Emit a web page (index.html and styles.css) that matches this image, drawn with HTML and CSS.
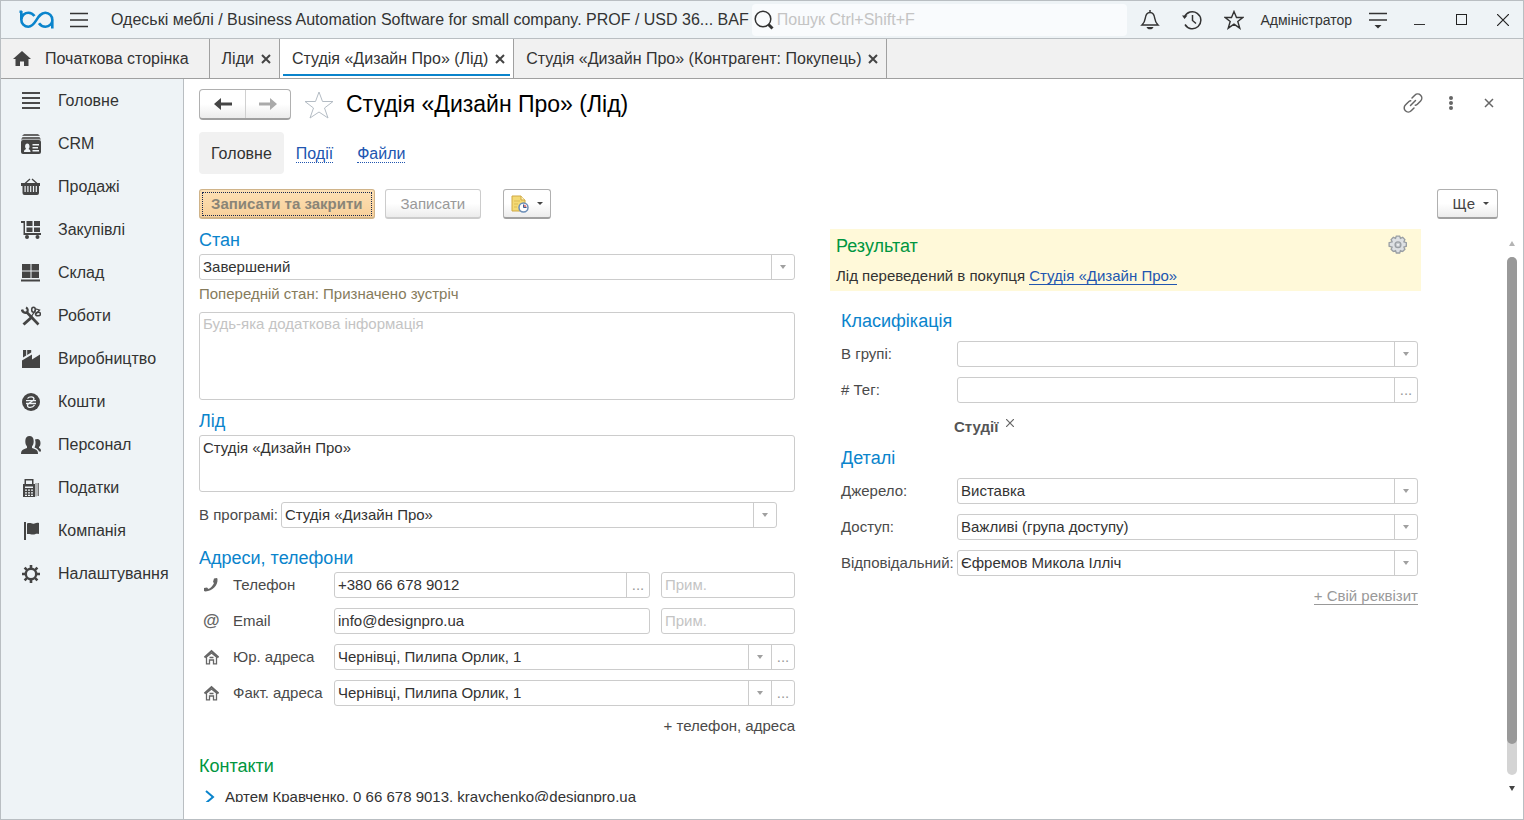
FILE: index.html
```html
<!DOCTYPE html>
<html lang="uk">
<head>
    <meta charset="UTF-8">
    <meta name="viewport" content="width=device-width, initial-scale=1.0">
    <title>Студія «Дизайн Про» (Лід)</title>
    <link rel="stylesheet" href="styles.css">
</head>
<body>
<div class="window">
    <header class="titlebar">
        <svg class="logo" width="36" height="20" viewBox="0 0 36 20" fill="none" stroke="#0a84cc" stroke-width="2.600">
            <path d="M.5 1.800H3M2.300 1v8.500a7 7 0 0 0 7 7.200c8 0 8.500-14 17-14a7 7 0 0 1 7 7.300v8.500M33.500 9.800a7 7 0 0 1-7 6.900c-3.200 0-5.200-1.500-6.500-3.500M15.500 6C14 4 12.200 2.700 9.500 2.700c-3.500 0-7 2.500-7 6.500"/>
        </svg>
        <button class="icon-btn menu-btn" aria-label="Меню">
            <svg width="18" height="16" viewBox="0 0 18 16" stroke="#333" stroke-width="1.500"><path d="M0 1.500h18M0 8h18M0 14.500h18"/></svg>
        </button>
        <span class="app-title">Одеські меблі / Business Automation Software for small company. PROF / USD 36... BAF</span>
        <label class="search">
            <svg width="20" height="20" viewBox="0 0 20 20" fill="none" stroke="#333"><circle cx="9" cy="9" r="7.800" stroke-width="1.500"/><path d="M14.500 14.500l4 4" stroke-width="3"/></svg>
            <input type="text" placeholder="Пошук Ctrl+Shift+F" aria-label="Пошук">
        </label>
        <button class="icon-btn" aria-label="Сповіщення">
            <svg width="20" height="20" viewBox="0 0 20 20" fill="none" stroke="#333" stroke-width="1.500"><path d="M10 0v2M2 15h16c-2-2-2.800-3.500-3.200-6.500C14.300 4.500 13 2.500 10 2.500S5.700 4.500 5.200 8.500C4.800 11.500 4 13 2 15z"/><path d="M6.500 17h7c-.7 1.500-1.500 2.300-3.500 2.300S7.200 18.500 6.500 17z" fill="#333" stroke="none"/></svg>
        </button>
        <button class="icon-btn" aria-label="Історія">
            <svg width="20" height="20" viewBox="0 0 20 20" fill="none" stroke="#333" stroke-width="1.500"><path d="M2.500 7A8.500 8.500 0 1 1 3 14.500"/><path d="M10.500 5v5.500l3.500 3"/><path d="M0 5.500h5.500L2.500 9z" fill="#333" stroke="none"/></svg>
        </button>
        <button class="icon-btn" aria-label="Обране">
            <svg width="20" height="20" viewBox="0 0 20 20" fill="none" stroke="#333" stroke-width="1.400"><path d="M10 1.500l2.500 6h6.300l-5 4 2 6.700-5.800-4-5.800 4 2-6.700-5-4h6.300z"/></svg>
        </button>
        <a class="user" href="#">Адміністратор</a>
        <button class="icon-btn" aria-label="Налаштування вікна">
            <svg width="18" height="18" viewBox="0 0 18 18" stroke="#333" stroke-width="1.500"><path d="M0 2.500h18M0 9h18"/><path d="M5.500 14h7l-3.500 3.500z" fill="#333" stroke="none"/></svg>
        </button>
        <button class="icon-btn" aria-label="Згорнути">
            <svg width="12" height="12" viewBox="0 0 12 12" stroke="#333"><path d="M0 10.500h11"/></svg>
        </button>
        <button class="icon-btn" aria-label="Розгорнути">
            <svg width="12" height="12" viewBox="0 0 12 12" fill="none" stroke="#222"><rect x=".5" y=".5" width="10" height="10"/></svg>
        </button>
        <button class="icon-btn close-btn" aria-label="Закрити вікно">
            <svg width="12" height="12" viewBox="0 0 12 12" stroke="#222" stroke-width="1.200"><path d="M0 0l12 12M12 0L0 12"/></svg>
        </button>
    </header>

    <nav class="tabs">
        <a class="tab tab-home" href="#">
            <svg width="18" height="15" viewBox="0 0 18 15" fill="#444"><path d="M9 0l9 8h-2.500v7h-4.500v-4.500H7V15H2.500V8H0z"/></svg>
            Початкова сторінка
        </a>
        <div class="tab"><a href="#">Ліди</a><button class="tab-close" aria-label="Закрити"><svg width="10" height="10" viewBox="0 0 10 10"><path d="M1 1l8 8M9 1L1 9"/></svg></button></div>
        <div class="tab active"><a href="#">Студія «Дизайн Про» (Лід)</a><button class="tab-close" aria-label="Закрити"><svg width="10" height="10" viewBox="0 0 10 10"><path d="M1 1l8 8M9 1L1 9"/></svg></button></div>
        <div class="tab"><a href="#">Студія «Дизайн Про» (Контрагент: Покупець)</a><button class="tab-close" aria-label="Закрити"><svg width="10" height="10" viewBox="0 0 10 10"><path d="M1 1l8 8M9 1L1 9"/></svg></button></div>
    </nav>

    <div class="workspace">
        <nav class="sidebar">
            <a href="#"><svg width="20" height="20" viewBox="0 0 20 20" stroke="#4a4a4a" stroke-width="2"><path d="M1 2h18M1 7h18M1 12h18M1 17h18"/></svg>Головне</a>
            <a href="#"><svg width="20" height="20" viewBox="0 0 20 20" fill="#444"><path d="M3 0h14l2 2H1zM1.500 3h17L20 5.500H0z" fill="#666"/><path fill-rule="evenodd" d="M2 6h16a2 2 0 0 1 2 2v10a2 2 0 0 1-2 2H2a2 2 0 0 1-2-2V8a2 2 0 0 1 2-2zm1 12h6.500c0-2-.8-2.500-2-3 .8-.7 1-1.500 1-2.500 0-1.700-.8-3-2.200-3s-2.200 1.300-2.200 3c0 1 .3 1.800 1 2.500-1.300.5-2.100 1-2.100 3zM11.500 10v1.500H18V10zm0 3v1.500H17V13zm0 3v1.500H18V16z"/></svg>CRM</a>
            <a href="#"><svg width="20" height="20" viewBox="0 0 20 20" fill="#444"><path d="M4 6.500L9 2M16 6.500L11 2" stroke="#444" stroke-width="1.300"/><path d="M0 6h19v3H0z"/><path fill-rule="evenodd" d="M1.500 9h16.500v7a2 2 0 0 1-2 2H3.500a2 2 0 0 1-2-2zm2 0v6h1.200V9zm2.800 0v6h1.200V9zm2.800 0v6h1.200V9zm2.800 0v6h1.200V9zm2.800 0v6h1.200V9z"/></svg>Продажі</a>
            <a href="#"><svg width="20" height="20" viewBox="0 0 20 20" fill="#444"><path d="M0 1h4v12h16v2H2.500V3H0zM5.500 1h6v5h-6zM13 1h6v5h-6zM5.500 7.500h6v4.500h-6zM13 7.500h6v4.500h-6z"/><circle cx="6" cy="17" r="2"/><circle cx="16.500" cy="17" r="2"/></svg>Закупівлі</a>
            <a href="#"><svg width="20" height="20" viewBox="0 0 20 20" fill="#444"><path d="M1 1h8.500v6.500H1zM10.500 1H18v6.500h-7.500zM1 8.500h8.500V15H1zM10.500 8.500H18V15h-7.500zM0 16.500h19v2H0z"/></svg>Склад</a>
            <a href="#"><svg width="20" height="20" viewBox="0 0 20 20" fill="none" stroke="#444"><path d="M1 3.500c.5 2.500 2.500 3.800 5 3L17.500 18.500" stroke-width="2.600"/><path d="M5 1.500c1.800 1 2.300 3 1 5" stroke-width="2.200"/><path d="M2.500 18.500l9-8" stroke-width="3"/><ellipse cx="12.500" cy="3.800" rx="1.800" ry="2.500" stroke-width="1.500"/><ellipse cx="17" cy="8" rx="2.500" ry="1.800" stroke-width="1.500"/><path d="M10 11l3-4.500L15 3l3.500 1-3.500 4" stroke-width="1.300"/></svg>Роботи</a>
            <a href="#"><svg width="20" height="20" viewBox="0 0 20 20" fill="#444"><path d="M1 19v-7.500l10-6v5l8-5V19zM2 1h3.200v5.500L2 8.500zM6.200 1h4v2.500l-4 2.500z"/></svg>Виробництво</a>
            <a href="#"><svg width="20" height="20" viewBox="0 0 20 20" fill="none"><circle cx="10" cy="10" r="9" fill="#444"/><path d="M6.500 6.500C8 4.300 13 4 13 7c0 3-6.500 3-6.500 6.500 0 2.700 5 2.500 7-.3M5 8.700h10M5 11.500h10" stroke="#eef3f6" stroke-width="1.300"/></svg>Кошти</a>
            <a href="#"><svg width="20" height="20" viewBox="0 0 20 20" fill="#444"><path d="M0 19c0-4 2-4.500 6-6V11.500C4.800 10 4.300 8.500 4.300 6 4.300 2.700 6 1 8.500 1S12.700 2.700 12.700 6c0 2.500-.5 4-1.700 5.500V13c4 1.500 6 2 6 6z"/><path d="M14 4.500c3-1.500 5.500 0 5.500 3.500 0 2-.5 3-1.500 4v1c1.500.5 2 1 2 3.500h-2c-.5-2-2-3-4.500-4 1-2 1.500-5 .5-8z"/></svg>Персонал</a>
            <a href="#"><svg width="20" height="20" viewBox="0 0 20 20" fill="#444"><path fill-rule="evenodd" d="M3.500 1h9v5H14v13H2V6h1.500zM5 2.500V6h6V2.500zM4 8.500V10h8V8.500zM4 11.500v1.300h2v-1.300zm3 0v1.300h2v-1.300zm3 0v1.300h2v-1.300zm-6 2.700v1.300h2v-1.300zm3 0v1.300h2v-1.300zm3 0v1.300h2v-1.300zM4 16.700V18h2v-1.300zm3 0V18h2v-1.300zm3 0V18h2v-1.300z"/><path d="M14.500 5h1v13.500h-1zM16.500 5H18v13h-1.500z" fill="#777"/></svg>Податки</a>
            <a href="#"><svg width="20" height="20" viewBox="0 0 20 20" fill="#444"><path d="M3 1h2v18H3zM6 2.500c4-1.500 4.500 1 7.500 0 2-1 3-1 4.500-.5v11c-3-.8-4 .5-6 .5-2.500 0-3-.8-6-.5z"/></svg>Компанія</a>
            <a href="#"><svg width="20" height="20" viewBox="0 0 20 20" fill="none" stroke="#444"><circle cx="10" cy="10" r="5.200" stroke-width="2.400"/><path d="M10 1v3.500M10 15.500V19M1 10h3.500M15.500 10H19M3.600 3.600l2.500 2.500M13.900 13.900l2.500 2.500M3.600 16.400l2.500-2.500M13.900 6.100l2.500-2.500" stroke-width="2.600"/></svg>Налаштування</a>
        </nav>

        <main class="content">
            <div class="form-header">
                <div class="history-nav">
                    <button aria-label="Назад"><svg width="18" height="14" viewBox="0 0 18 14" fill="#444"><path d="M0 7l7-6v4.500h11v3H7V13z"/></svg></button>
                    <button aria-label="Вперед" disabled><svg width="18" height="14" viewBox="0 0 18 14" fill="#aaa"><path d="M18 7l-7-6v4.500H0v3h11V13z"/></svg></button>
                </div>
                <button class="fav" aria-label="Додати в обране"><svg width="30" height="28" viewBox="0 0 30 28" fill="none" stroke="#b4bcc4"><path d="M15 1l3.500 9.500H29l-8.500 6.500 3.500 10-9-6-9 6 3.500-10L1 10.500h10.500z"/></svg></button>
                <h1>Студія «Дизайн Про» (Лід)</h1>
                <button class="icon-btn" aria-label="Посилання"><svg width="20" height="20" viewBox="0 0 20 20" fill="none" stroke="#666" stroke-width="1.500" stroke-linecap="round"><path d="M9 5l2.800-2.800a3.900 3.900 0 0 1 5.800 5.800l-3 3a4 4 0 0 1-2.300 1.200M11 15l-2.800 2.800A3.900 3.900 0 0 1 2.400 12l3-3a4 4 0 0 1 2.300-1.200M7.500 12.500l5-5"/></svg></button>
                <button class="icon-btn" aria-label="Більше"><svg width="4" height="14" viewBox="0 0 4 14" fill="#666"><circle cx="2" cy="2" r="2"/><circle cx="2" cy="7" r="2"/><circle cx="2" cy="12" r="2"/></svg></button>
                <button class="icon-btn" aria-label="Закрити"><svg width="10" height="10" viewBox="0 0 10 10" stroke="#666" stroke-width="1.500"><path d="M1 1l8 8M9 1L1 9"/></svg></button>
            </div>

            <nav class="form-nav">
                <a class="current" href="#">Головне</a>
                <a href="#"><span>Події</span></a>
                <a href="#"><span>Файли</span></a>
            </nav>

            <div class="toolbar">
                <button class="btn primary">Записати та закрити</button>
                <button class="btn muted">Записати</button>
                <button class="btn reminder" aria-label="Створити нагадування">
                    <svg width="18" height="18" viewBox="0 0 18 18"><path d="M1 1h9l4 4v11H1z" fill="#f4da75" stroke="#cfa845"/><path d="M10 1v4h4" fill="#fff3c0" stroke="#cfa845"/><path d="M3 6h6M3 9h4M3 12h3" stroke="#dcbb55"/><circle cx="12.500" cy="12.500" r="4.500" fill="#fff" stroke="#6a8db8" stroke-width="1.500"/><path d="M12.500 12.500V9.500a3 3 0 0 1 3 3z" fill="#e08080"/><path d="M12.500 9.500v3h3" fill="none" stroke="#3c5f94"/></svg>
                    <span class="caret"></span>
                </button>
                <button class="btn more">Ще <span class="caret"></span></button>
            </div>

            <div class="form-area">
                <form class="columns">
                    <div class="column">
                        <h2>Стан</h2>
                        <div class="combo">
                            <select aria-label="Стан"><option>Завершений</option></select>
                        </div>
                        <p class="hint">Попередній стан: Призначено зустріч</p>
                        <textarea class="note" placeholder="Будь-яка додаткова інформація" aria-label="Додаткова інформація"></textarea>

                        <h2>Лід</h2>
                        <textarea class="name" aria-label="Лід">Студія «Дизайн Про»</textarea>
                        <div class="program-row">
                            <label for="program">В програмі:</label>
                            <div class="combo">
                                <select id="program"><option>Студія «Дизайн Про»</option></select>
                            </div>
                        </div>

                        <h2 class="spaced">Адреси, телефони</h2>
                        <div class="addresses">
                            <svg width="16" height="16" viewBox="0 0 16 16" fill="#666"><path d="M11 1.500l3-.5.500 1c.5 6.500-5 12-12 12.500L1 14v-3l3-.5 1.500 1.500c2.500-1 4.500-3.500 5.500-6L10 5z"/></svg>
                            <label for="phone">Телефон</label>
                            <div class="field">
                                <input type="text" id="phone" value="+380 66 678 9012">
                                <button type="button" class="dots" aria-label="Вибрати">...</button>
                            </div>
                            <input class="box" type="text" placeholder="Прим." aria-label="Примітка до телефону">

                            <span class="at">@</span>
                            <label for="email">Email</label>
                            <input class="box" type="text" id="email" value="info@designpro.ua">
                            <input class="box" type="text" placeholder="Прим." aria-label="Примітка до email">

                            <svg width="16" height="16" viewBox="0 0 16 16" fill="none" stroke="#666" stroke-width="1.500"><path d="M1.500 8.500L8.500 2l7 6.500" stroke-width="2"/><path d="M3.500 8v6.800h3V11h4v3.800h3V8l-5-4z" stroke-width="1.300"/><path d="M6.500 8.500h4"/></svg>
                            <label for="legal">Юр. адреса</label>
                            <div class="field wide">
                                <input type="text" id="legal" value="Чернівці, Пилипа Орлик, 1">
                                <button type="button" aria-label="Список"><span class="arrow"></span></button>
                                <button type="button" class="dots" aria-label="Вибрати">...</button>
                            </div>

                            <svg width="16" height="16" viewBox="0 0 16 16" fill="none" stroke="#666" stroke-width="1.500"><path d="M1.500 8.500L8.500 2l7 6.500" stroke-width="2"/><path d="M3.500 8v6.800h3V11h4v3.800h3V8l-5-4z" stroke-width="1.300"/><path d="M6.500 8.500h4"/></svg>
                            <label for="actual">Факт. адреса</label>
                            <div class="field wide">
                                <input type="text" id="actual" value="Чернівці, Пилипа Орлик, 1">
                                <button type="button" aria-label="Список"><span class="arrow"></span></button>
                                <button type="button" class="dots" aria-label="Вибрати">...</button>
                            </div>
                        </div>
                        <a class="add-link" href="#">+ телефон, адреса</a>

                        <h2 class="spaced green">Контакти</h2>
                        <div class="contact">
                            <svg width="10" height="14" viewBox="0 0 10 14" fill="none" stroke="#0a84cc" stroke-width="2"><path d="M1 1l7 6-7 6"/></svg>
                            Артем Кравченко, 0 66 678 9013, kravchenko@designpro.ua
                        </div>
                    </div>

                    <div class="column">
                        <section class="result">
                            <h2 class="green">Результат</h2>
                            <p>Лід переведений в покупця <a href="#">Студія «Дизайн Про»</a></p>
                            <button type="button" class="gear" aria-label="Налаштування результату">
                                <svg width="20" height="20" viewBox="0 0 18 18" fill="#dde0e3" stroke="#9a9fa4" stroke-width="1.200"><path d="M7.500 1h3l.7 2 2-.9 2 2-.9 2 2.200.8v3.200l-2.200.8.9 2-2 2-2-.9-.7 2.200h-3l-.7-2.200-2 .9-2-2 .9-2L1 10.100V6.900l2.700-.8-.9-2 2-2 2 .9z"/><circle cx="9" cy="8.800" r="2.600" fill="#c8ccd0"/><circle cx="9" cy="8.800" r=".8" fill="#fff" stroke="none"/></svg>
                            </button>
                        </section>

                        <div class="details">
                            <h2>Класифікація</h2>
                            <div class="props">
                                <label for="group">В групі:</label>
                                <div class="combo"><select id="group"><option></option></select></div>
                                <label for="tag"># Тег:</label>
                                <div class="field">
                                    <input type="text" id="tag">
                                    <button type="button" class="dots" aria-label="Вибрати">...</button>
                                </div>
                            </div>
                            <div class="tag">
                                Студії
                                <button type="button" aria-label="Видалити тег"><svg width="8" height="8" viewBox="0 0 8 8" stroke="#666" stroke-width="1.200"><path d="M0 0l8 8M8 0L0 8"/></svg></button>
                            </div>

                            <h2>Деталі</h2>
                            <div class="props">
                                <label for="source">Джерело:</label>
                                <div class="combo"><select id="source"><option>Виставка</option></select></div>
                                <label for="access">Доступ:</label>
                                <div class="combo"><select id="access"><option>Важливі (група доступу)</option></select></div>
                                <label for="owner">Відповідальний:</label>
                                <div class="combo"><select id="owner"><option>Єфремов Микола Ілліч</option></select></div>
                            </div>
                            <a class="custom-link" href="#">+ Свій реквізит</a>
                        </div>
                    </div>
                </form>

                <div class="scrollbar">
                    <span class="scroll-up"></span>
                    <div class="track"><div class="thumb"></div></div>
                    <span class="scroll-down"></span>
                </div>
            </div>
        </main>
    </div>
</div>
</body>
</html>
```
FILE: styles.css
```css
* {
    box-sizing: border-box;
}

body {
    margin: 0;
    font-family: "Liberation Sans", Arial, sans-serif;
    font-size: 15px;
    line-height: 20px;
    color: #333;
    background: #fff;
}

h1, h2, p {
    margin: 0;
    font-weight: normal;
}

button, input, select, textarea {
    font: inherit;
    color: inherit;
}

button {
    padding: 0;
    border: none;
    background: none;
    cursor: pointer;
}

a {
    color: inherit;
    text-decoration: none;
}

svg {
    flex: none;
    display: block;
}

.window {
    display: flex;
    flex-direction: column;
    height: 100vh;
    border: 1px solid #b9bec2;
}

/* title bar */
.titlebar {
    display: flex;
    align-items: center;
    height: 38px;
    flex: none;
    padding-left: 18px;
    background: #eef3f6;
    border-bottom: 1px solid #b9bec2;
}

.icon-btn {
    display: flex;
    flex: none;
    align-items: center;
    justify-content: center;
    width: 42px;
    height: 32px;
}

.close-btn {
    width: 40px;
}

.menu-btn {
    width: 48px;
}

.app-title {
    font-size: 16px;
    white-space: nowrap;
    margin-left: 8px;
}

.search {
    display: flex;
    flex: 1;
    min-width: 0;
    align-items: center;
    gap: 3px;
    height: 32px;
    margin: 0 2px 0 3px;
    padding-left: 2px;
    border-radius: 4px;
    background: #f9fbfd;
}

.search input {
    flex: 1;
    min-width: 0;
    padding: 0;
    border: none;
    background: none;
    font-size: 16px;
}

::placeholder {
    color: #c4c4c4;
    opacity: 1;
}

.user {
    margin: 0 5px;
    font-size: 14px;
}

/* window tabs */
.tabs {
    display: flex;
    flex: none;
    height: 40px;
    font-size: 16px;
    background: #f1f1f1;
    border-bottom: 1px solid #a0a0a0;
}

.tab {
    display: flex;
    align-items: center;
    gap: 7px;
    padding: 0 8px 0 12px;
    white-space: nowrap;
    border-right: 1px solid #a0a0a0;
}

.tab-home {
    gap: 14px;
    padding-right: 20px;
}

.tab.active {
    position: relative;
    background: #fff;
}

.tab.active::after {
    content: "";
    position: absolute;
    left: 3px;
    right: 3px;
    bottom: 2px;
    height: 2px;
    background: #0a84cc;
}

.tab-close svg {
    stroke: #444;
    stroke-width: 2;
}

/* sections panel */
.workspace {
    display: flex;
    flex: 1;
    min-height: 0;
}

.sidebar {
    flex: none;
    width: 183px;
    background: #eef3f6;
    border-right: 1px solid #b9bec2;
}

.sidebar a {
    display: flex;
    align-items: center;
    gap: 17px;
    height: 43px;
    padding-left: 20px;
    font-size: 16px;
}

.content {
    display: flex;
    flex: 1;
    flex-direction: column;
    min-width: 0;
    padding: 10px 0 17px 15px;
}

/* form header */
.form-header {
    display: flex;
    height: 31px;
    padding-right: 15px;
}

.form-header h1 {
    flex: 1;
    margin-left: 12px;
    font-size: 23px;
    line-height: 30px;
    color: #000;
}

.form-header .icon-btn {
    width: 38px;
    height: 28px;
}

.history-nav {
    display: flex;
    height: 31px;
    border: 1px solid #b0b0b0;
    border-bottom: 2px solid #a0a0a0;
    border-radius: 4px;
    background: linear-gradient(#fff 50%, #ececec);
}

.history-nav button {
    display: flex;
    align-items: center;
    justify-content: center;
    width: 45px;
}

.history-nav button + button {
    border-left: 1px solid #d0d0d0;
}

.fav {
    margin-left: 13px;
}

.form-nav {
    display: flex;
    margin-top: 12px;
    font-size: 16px;
}

.form-nav a {
    padding: 12px 12px 10px;
    color: #2156b0;
    border-radius: 4px;
}

.form-nav span {
    border-bottom: 1px dotted #2156b0;
}

.form-nav .current {
    color: #333;
    background: #f1f1f1;
}

/* commands */
.toolbar {
    display: flex;
    gap: 10px;
    margin-top: 15px;
    padding-right: 25px;
}

.btn {
    display: flex;
    align-items: center;
    justify-content: center;
    height: 30px;
    padding: 0 15px;
    color: #444;
    border: 1px solid #b0b0b0;
    border-bottom: 2px solid #a0a0a0;
    border-radius: 3px;
    background: linear-gradient(#fff 50%, #ececec);
}

.btn.primary {
    padding: 0 11px;
    font-weight: bold;
    color: #8a8577;
    background: linear-gradient(#fde0b4, #f8d09a);
    border-color: #d0b48a;
    outline: 1px dotted #1a2a50;
    outline-offset: -4px;
}

.btn.muted {
    color: #999;
    border-color: #ccc;
}

.btn.reminder {
    gap: 8px;
    margin-left: 12px;
    padding: 0 7px;
}

.btn.more {
    gap: 8px;
    margin-left: auto;
    padding: 0 8px 0 15px;
}

.caret {
    border: 3px solid transparent;
    border-top-color: #444;
    border-bottom: none;
}

/* form */
.form-area {
    display: flex;
    flex: 1;
    min-height: 0;
    margin-top: 10px;
}

.columns {
    display: grid;
    flex: 1;
    grid-template-columns: 596fr 591fr;
    column-gap: 35px;
    min-width: 0;
    padding-right: 86px;
    overflow: hidden;
}

.column {
    min-width: 0;
}

h2 {
    font-size: 18px;
    line-height: 22px;
    margin: 10px 0 3px;
    color: #0a84cc;
}

h2:first-child {
    margin-top: 0;
}

h2.spaced {
    margin-top: 19px;
}

h2.green {
    color: #009640;
}

.field, .box, select, textarea {
    width: 100%;
    border: 1px solid #ccc;
    border-radius: 3px;
    background: #fff;
}

.field {
    display: flex;
    height: 26px;
}

.field input {
    flex: 1;
    min-width: 0;
    padding: 0 3px;
    border: none;
    background: none;
}

.field button {
    display: flex;
    align-items: center;
    justify-content: center;
    width: 23px;
    color: #999;
    border-left: 1px solid #ccc;
}

.box {
    height: 26px;
    min-width: 0;
    padding: 0 3px 2px;
}

.combo {
    position: relative;
    flex: 1;
    height: 26px;
}

.combo select {
    display: block;
    height: 26px;
    padding: 0 26px 0 3px;
    appearance: none;
}

/* drop-down button drawn over the right end of the select */
.combo::before {
    content: "";
    position: absolute;
    top: 1px;
    bottom: 1px;
    right: 23px;
    border-left: 1px solid #ccc;
    pointer-events: none;
}

.combo::after {
    content: "";
    position: absolute;
    top: 11px;
    right: 9px;
    pointer-events: none;
}

.combo::after, .arrow {
    border: 3px solid transparent;
    border-top: 4px solid #a0a0a0;
    border-bottom: none;
}

textarea {
    display: block;
    padding: 2px 3px;
    resize: none;
}

.note {
    height: 88px;
    padding-top: 1px;
}

.name {
    height: 57px;
}

.hint {
    margin: 4px 0 8px;
    color: #857b5c;
}

.program-row {
    display: flex;
    align-items: center;
    gap: 3px;
    margin: 10px 18px 0 0;
}

label {
    color: #4a4a4a;
}

.addresses {
    display: grid;
    grid-template-columns: 23px 90px 1fr 134px;
    align-items: center;
    gap: 10px 11px;
}

.addresses > svg, .at {
    margin-left: 4px;
}

.addresses label {
    white-space: nowrap;
}

.at {
    font-size: 17px;
    font-weight: bold;
    color: #666;
}

.wide {
    grid-column: span 2;
}

.add-link {
    display: block;
    margin-top: 10px;
    text-align: right;
    color: #4a4a4a;
}

.contact {
    display: flex;
    align-items: center;
    gap: 10px;
    margin-top: 10px;
    padding-left: 6px;
    white-space: nowrap;
}

.result {
    position: relative;
    height: 62px;
    padding: 6px;
    background: #fff9d9;
}

.result h2 {
    margin-bottom: 9px;
}

.result a {
    color: #2156b0;
    border-bottom: 1px solid #2156b0;
}

.gear {
    position: absolute;
    top: 6px;
    right: 13px;
}

.details {
    padding: 19px 3px 0 11px;
}

.details h2 {
    margin-bottom: 9px;
}

.props {
    display: grid;
    grid-template-columns: 116px 1fr;
    align-items: center;
    row-gap: 10px;
}

.props label {
    white-space: nowrap;
}

.tag {
    display: flex;
    gap: 8px;
    height: 20px;
    margin: 14px 0 10px 113px;
    font-weight: bold;
    color: #555;
}

.tag button {
    height: 12px;
}

.custom-link {
    display: block;
    width: fit-content;
    margin: 11px 0 0 auto;
    line-height: 17px;
    color: #999;
    border-bottom: 1px solid #999;
}

/* scrollbar */
.scrollbar {
    display: flex;
    flex: none;
    flex-direction: column;
    align-items: center;
    width: 10px;
    margin-right: 6px;
    padding: 12px 0 11px;
}

.track {
    flex: 1;
    width: 10px;
    margin: 11px 0;
    border-radius: 5px;
    background: #d4d4d4;
}

.thumb {
    height: 94%;
    border-radius: 5px;
    background: #999;
}

.scroll-up, .scroll-down {
    border: 3px solid transparent;
}

.scroll-up {
    border-top: none;
    border-bottom: 5px solid #b4b4b4;
}

.scroll-down {
    border-bottom: none;
    border-top: 5px solid #444;
}
```
